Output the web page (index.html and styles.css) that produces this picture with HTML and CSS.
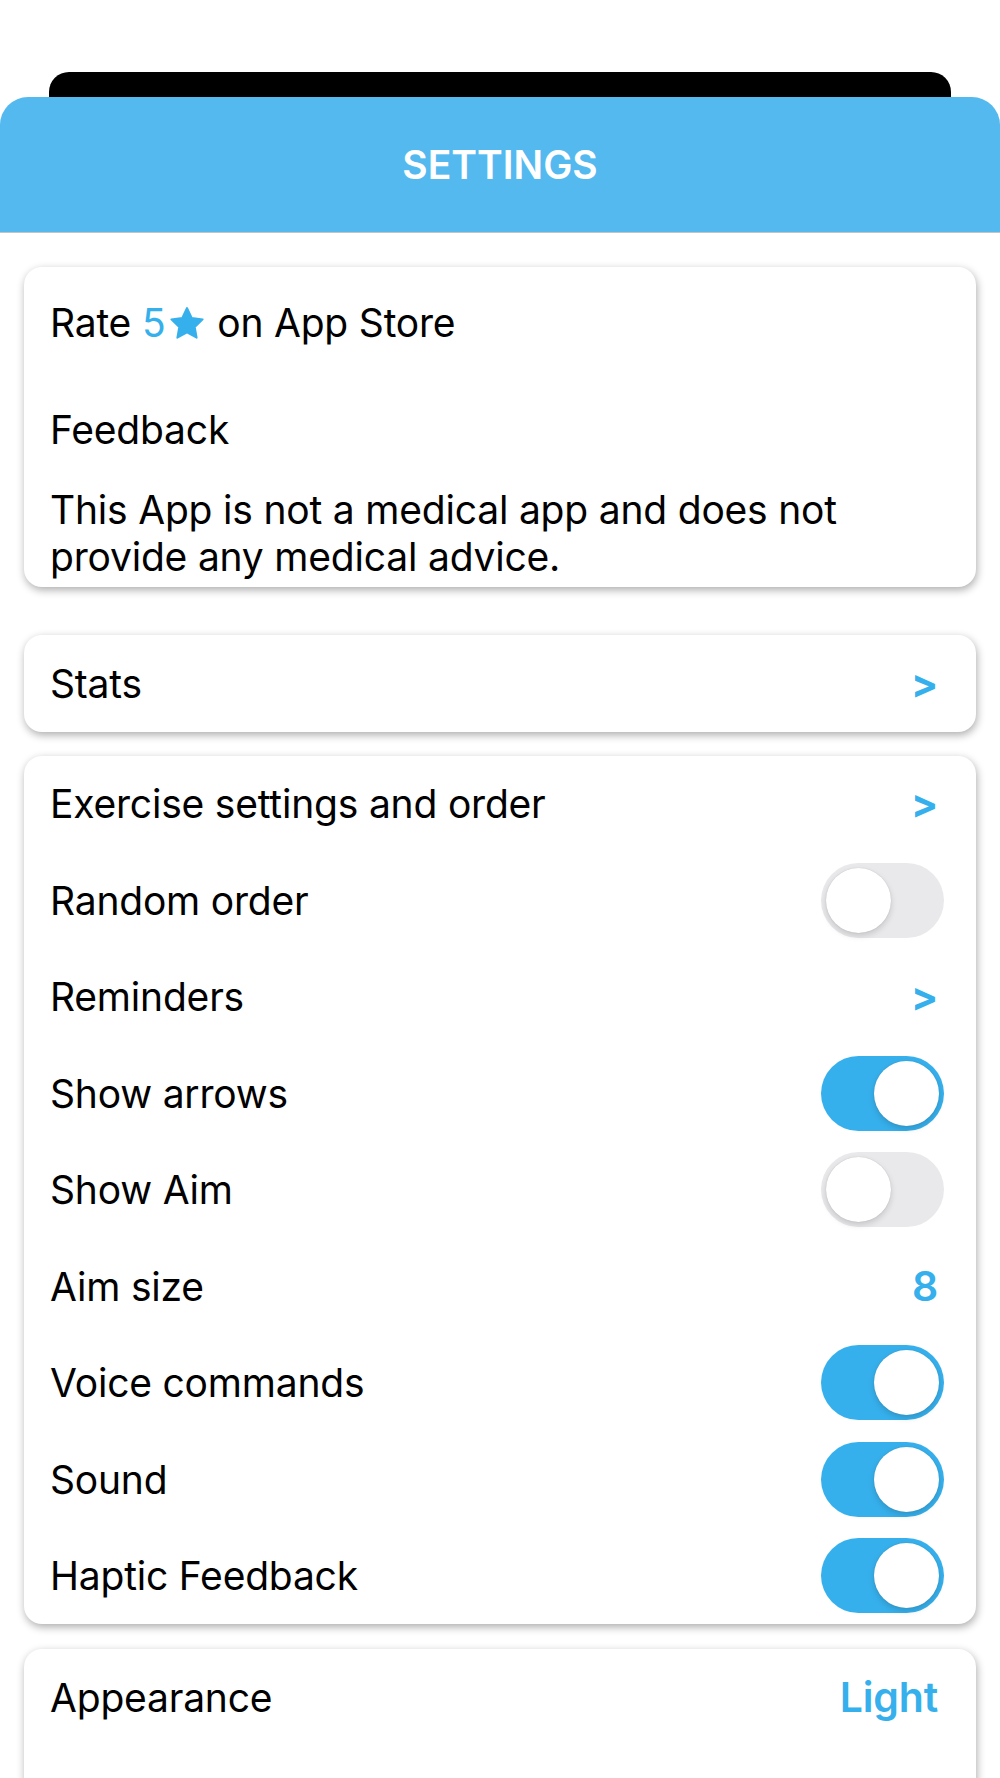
FILE: index.html
```html
<!DOCTYPE html>
<html lang="en">
<head>
    <meta charset="UTF-8">
    <meta name="viewport" content="width=device-width, initial-scale=1.0">
    <title>Settings</title>
    <link rel="stylesheet" href="styles.css">
</head>
<body>
    <div class="sheet-back"></div>
    <header class="header">SETTINGS</header>

    <main class="list">
        <section class="card card-info">
            <div class="row row-rate">
                <span>Rate <span class="accent">5<svg class="star" viewBox="0 0 24 22"><path d="M12 1.2l3 6.3 6.9.9-5 4.8 1.2 6.8L12 16.7 5.9 20l1.2-6.8-5-4.8 6.9-.9z"/></svg></span> on App Store</span>
            </div>
            <div class="row row-feedback">
                <span>Feedback</span>
            </div>
            <p class="note">This App is not a medical app and does not provide any medical advice.</p>
        </section>

        <section class="card card-stats">
            <div class="row">
                <span>Stats</span>
                <span class="chevron">&gt;</span>
            </div>
        </section>

        <section class="card">
            <div class="row">
                <span>Exercise settings and order</span>
                <span class="chevron">&gt;</span>
            </div>
            <div class="row">
                <span>Random order</span>
                <span class="toggle"></span>
            </div>
            <div class="row">
                <span>Reminders</span>
                <span class="chevron">&gt;</span>
            </div>
            <div class="row">
                <span>Show arrows</span>
                <span class="toggle on"></span>
            </div>
            <div class="row">
                <span>Show Aim</span>
                <span class="toggle"></span>
            </div>
            <div class="row">
                <span>Aim size</span>
                <span class="value">8</span>
            </div>
            <div class="row">
                <span>Voice commands</span>
                <span class="toggle on"></span>
            </div>
            <div class="row">
                <span>Sound</span>
                <span class="toggle on"></span>
            </div>
            <div class="row">
                <span>Haptic Feedback</span>
                <span class="toggle on"></span>
            </div>
        </section>

        <section class="card card-last">
            <div class="row">
                <span>Appearance</span>
                <span class="value">Light</span>
            </div>
        </section>
    </main>
</body>
</html>
```

FILE: styles.css
```css
body {
    margin: 0;
    background-color: #fff;
    font-family: Inter, "Noto Sans", sans-serif;
    color: #000;
    overflow: hidden;
}
.sheet-back {
    height: 25px;
    margin: 72px 49px 0;
    background-color: #000;
    border-radius: 20px 20px 0 0;
}
.header {
    height: 135px;
    display: flex;
    justify-content: center;
    align-items: center;
    background-color: #53b9ef;
    border-radius: 28px 28px 0 0;
    border-bottom: 1px solid #c4c4c4;
    color: #fff;
    font-size: 39px;
    font-weight: 600;
}
.list {
    padding: 34px 24px 0;
}
.card {
    background-color: #fff;
    border-radius: 18px;
    box-shadow: 1px 3px 9px rgba(0, 0, 0, 0.33);
    margin-bottom: 24px;
}
.card-info {
    margin-bottom: 48px;
}
.card-stats {
    margin-bottom: 24px;
}
.card-last {
    margin-top: 25px;
    height: 200px;
}
.row {
    height: 96.5px;
    display: flex;
    justify-content: space-between;
    align-items: center;
    padding: 0 32px 0 26px;
    font-size: 39px;
    letter-spacing: -0.2px;
}
.row-rate {
    height: 110px;
}
.row-feedback {
    height: 104px;
}
.note {
    margin: 5px 0 0;
    padding: 0 32px 7px 26px;
    font-size: 39px;
    line-height: 47px;
    letter-spacing: -0.2px;
}
.accent {
    color: #36b0ec;
}
.star {
    width: 38px;
    height: 35px;
    margin-left: 3px;
    vertical-align: -4px;
    fill: #36b0ec;
    stroke: #36b0ec;
    stroke-width: 1.2;
    stroke-linejoin: round;
}
.chevron {
    color: #36b0ec;
    font-weight: 700;
    font-size: 40px;
    margin-right: 6px;
}
.value {
    color: #36b0ec;
    font-weight: 600;
    font-size: 41px;
    margin-right: 6px;
}
.toggle {
    width: 123px;
    height: 75px;
    border-radius: 38px;
    background-color: #e9e9eb;
    position: relative;
}
.toggle::after {
    content: "";
    position: absolute;
    top: 5px;
    left: 5px;
    width: 65px;
    height: 65px;
    border-radius: 50%;
    background-color: #fff;
    box-shadow: 0 3px 6px rgba(0, 0, 0, 0.15), 0 0 1px rgba(0, 0, 0, 0.2);
}
.toggle.on {
    background-color: #36b0ec;
}
.toggle.on::after {
    left: 53px;
}
```
